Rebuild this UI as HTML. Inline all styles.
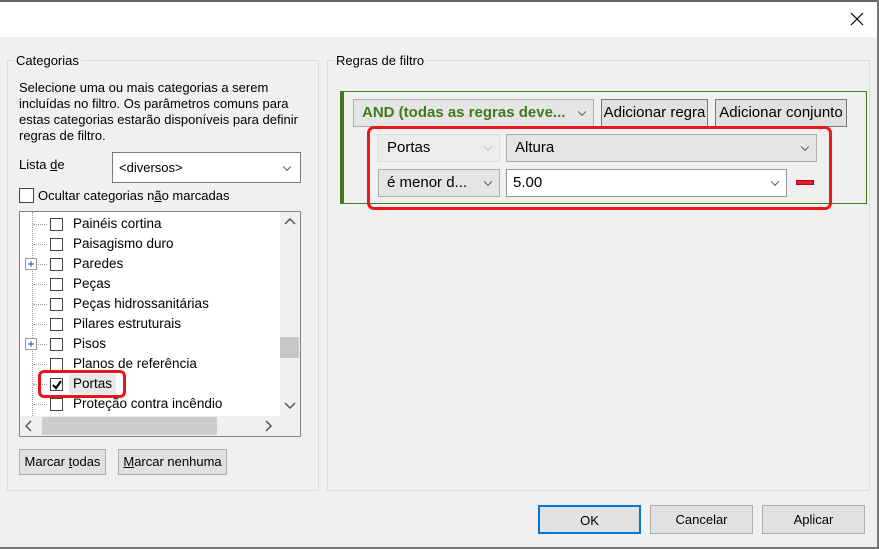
<!DOCTYPE html>
<html><head><meta charset="utf-8"><style>
*{box-sizing:border-box;margin:0;padding:0}
body{width:879px;height:549px;background:#f0f0f0;font-family:"Liberation Sans",sans-serif;font-size:13px;color:#000;position:relative;overflow:hidden}
.a{position:absolute}
.grp{position:absolute;border:1px solid #dcdcdc}
.lbl{position:absolute;background:#f0f0f0;padding:0 2px;font-size:13px}
.btn{position:absolute;background:#e1e1e1;border:1px solid #adadad;text-align:center;font-size:13px}
.cb{position:absolute;width:13px;height:13px;border:1px solid #444;background:#fff}
.row{position:absolute;left:73px;font-size:13.5px;line-height:20px;height:20px}
.dot{position:absolute;border-top:1px dotted #a0a0a0;width:14px}
.combo{position:absolute;border:1px solid #adadad;background:#e5e5e5;font-size:15px;padding-left:8px}
.chev{position:absolute;right:8px;top:50%;width:6px;height:6px;border-right:1px solid #555;border-bottom:1px solid #555;transform:translateY(-70%) rotate(45deg)}
</style></head><body>
<div class="a" style="left:0;top:0;width:879px;height:37px;background:#fff;border-top:2px solid #666"></div>
<div class="a" style="left:877px;top:0;width:2px;height:549px;background:#777"></div>
<div class="a" style="left:0;top:547px;width:879px;height:2px;background:#777"></div>
<svg class="a" style="left:850px;top:12px" width="14" height="14"><path d="M1 1L13 13M13 1L1 13" stroke="#000" stroke-width="1.2"/></svg>

<div class="grp" style="left:7px;top:60px;width:312px;height:431px"></div>
<div class="lbl" style="left:14px;top:53px">Categorias</div>
<div class="a" style="left:19px;top:80px;line-height:16px;width:290px">Selecione uma ou mais categorias a serem incluídas no filtro. Os parâmetros comuns para estas categorias estarão disponíveis para definir regras de filtro.</div>
<div class="a" style="left:19px;top:157px">Lista <u>d</u>e</div>
<div class="a" style="left:112px;top:152px;width:189px;height:31px;border:1px solid #7a7a7a;background:#fff;padding:7px 0 0 6px">&lt;diversos&gt;<div class="chev" style="right:10px"></div></div>
<div class="cb" style="left:19px;top:188px;width:15px;height:15px"></div>
<div class="a" style="left:38px;top:188px">Ocultar categorias n<u>ã</u>o marcadas</div>

<div class="a" style="left:19px;top:211px;width:282px;height:226px;border:1px solid #828282;background:#fff"></div>
<div class="a" style="left:32px;top:212px;height:204px;border-left:1px dotted #a0a0a0"></div>
<div class="a" style="left:280px;top:212px;width:20px;height:204px;background:#f0f0f0"></div>
<div class="a" style="left:280px;top:337px;width:19px;height:21px;background:#c6c6c6"></div>
<svg class="a" style="left:284px;top:218px" width="12" height="8"><path d="M1 6L6 1L11 6" fill="none" stroke="#555" stroke-width="1.5"/></svg>
<svg class="a" style="left:284px;top:402px" width="12" height="8"><path d="M1 1L6 6L11 1" fill="none" stroke="#555" stroke-width="1.5"/></svg>
<div class="a" style="left:20px;top:416px;width:280px;height:20px;background:#f0f0f0"></div>
<div class="a" style="left:42px;top:417px;width:175px;height:18px;background:#cdcdcd"></div>
<svg class="a" style="left:25px;top:420px" width="8" height="12"><path d="M6 1L1 6L6 11" fill="none" stroke="#555" stroke-width="1.5"/></svg>
<svg class="a" style="left:265px;top:420px" width="8" height="12"><path d="M1 1L6 6L1 11" fill="none" stroke="#555" stroke-width="1.5"/></svg>

<div class="dot" style="left:33px;top:224px"></div><div class="cb" style="left:50px;top:218px"></div><div class="row" style="top:214px">Painéis cortina</div>
<div class="dot" style="left:33px;top:244px"></div><div class="cb" style="left:50px;top:238px"></div><div class="row" style="top:234px">Paisagismo duro</div>
<div class="dot" style="left:33px;top:264px"></div><div class="cb" style="left:50px;top:258px"></div><div class="row" style="top:254px">Paredes</div>
<div class="dot" style="left:33px;top:284px"></div><div class="cb" style="left:50px;top:278px"></div><div class="row" style="top:274px">Peças</div>
<div class="dot" style="left:33px;top:304px"></div><div class="cb" style="left:50px;top:298px"></div><div class="row" style="top:294px">Peças hidrossanitárias</div>
<div class="dot" style="left:33px;top:324px"></div><div class="cb" style="left:50px;top:318px"></div><div class="row" style="top:314px">Pilares estruturais</div>
<div class="dot" style="left:33px;top:344px"></div><div class="cb" style="left:50px;top:338px"></div><div class="row" style="top:334px">Pisos</div>
<div class="dot" style="left:33px;top:364px"></div><div class="cb" style="left:50px;top:358px"></div><div class="row" style="top:354px">Planos de referência</div>
<div class="dot" style="left:33px;top:384px"></div><div class="cb" style="left:50px;top:378px"></div><div class="a" style="left:69px;top:374px;width:47px;height:20px;background:#e8e8e8"></div><div class="row" style="top:374px">Portas</div>
<svg class="a" style="left:51px;top:379px" width="12" height="12"><path d="M2 6L5 9L10 2" fill="none" stroke="#000" stroke-width="2.2"/></svg>
<div class="dot" style="left:33px;top:404px"></div><div class="cb" style="left:50px;top:398px"></div><div class="row" style="top:394px">Proteção contra incêndio</div>
<svg class="a" style="left:25px;top:258px" width="13" height="13"><rect x="0.5" y="0.5" width="11" height="11" fill="#fff" stroke="#999"/><path d="M3 6H9M6 3V9" stroke="#1c4f8c"/></svg>
<svg class="a" style="left:25px;top:338px" width="13" height="13"><rect x="0.5" y="0.5" width="11" height="11" fill="#fff" stroke="#999"/><path d="M3 6H9M6 3V9" stroke="#1c4f8c"/></svg>
<div class="a" style="left:38px;top:370px;width:88px;height:28px;border:3px solid #e8141b;border-radius:6px"></div>

<div class="btn" style="left:19px;top:449px;width:87px;height:26px;line-height:24px">Marcar <u>t</u>odas</div>
<div class="btn" style="left:118px;top:449px;width:109px;height:26px;line-height:24px"><u>M</u>arcar nenhuma</div>

<div class="grp" style="left:327px;top:60px;width:543px;height:431px"></div>
<div class="lbl" style="left:334px;top:53px">Regras de filtro</div>
<div class="a" style="left:340px;top:91px;width:527px;height:113px;border:1px solid #3f7a1e;border-left:4px solid #3f7a1e"></div>
<div class="combo" style="left:353px;top:99px;width:241px;height:28px;line-height:26px;color:#3f7a1e;font-weight:bold">AND (todas as regras deve...<div class="chev"></div></div>
<div class="btn" style="left:601px;top:99px;width:107px;height:28px;line-height:26px;font-size:15px;border-color:#7a7a7a;white-space:nowrap">Adicionar regra</div>
<div class="btn" style="left:715px;top:99px;width:132px;height:28px;line-height:26px;font-size:15px;border-color:#7a7a7a;white-space:nowrap">Adicionar conjunto</div>
<div class="combo" style="left:378px;top:134px;width:122px;height:28px;line-height:26px;border-color:#ddd;background:#ececec">Portas<div class="chev" style="border-color:#bbb"></div></div>
<div class="combo" style="left:506px;top:134px;width:311px;height:28px;line-height:26px">Altura<div class="chev"></div></div>
<div class="combo" style="left:378px;top:169px;width:122px;height:28px;line-height:26px">é menor d...<div class="chev"></div></div>
<div class="combo" style="left:506px;top:169px;width:281px;height:28px;line-height:26px;background:#fff;border-color:#999;padding-left:6px">5.00<div class="chev"></div></div>
<div class="a" style="left:796px;top:180px;width:18px;height:5px;background:#e31e24;border:1px solid #b01;"></div>
<div class="a" style="left:367px;top:126px;width:465px;height:84px;border:3px solid #f0141b;border-radius:7px"></div>

<div class="btn" style="left:538px;top:505px;width:103px;height:29px;line-height:27px;border:2px solid #0078d7">OK</div>
<div class="btn" style="left:650px;top:505px;width:103px;height:29px;line-height:27px">Cancelar</div>
<div class="btn" style="left:762px;top:505px;width:103px;height:29px;line-height:27px">Aplicar</div>
</body></html>
